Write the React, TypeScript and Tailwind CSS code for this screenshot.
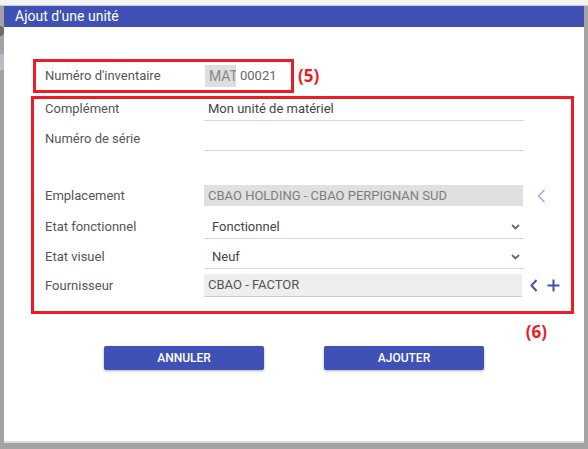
import React from 'react';

const Chevron = () => (
  <svg width="9" height="6" viewBox="0 0 9 6">
    <polyline points="1,1 4.5,4.5 8,1" fill="none" stroke="#666" strokeWidth="1.8" />
  </svg>
);

const Row = ({ label, children, center = false, className = '' }: { label: string; children: React.ReactNode; center?: boolean; className?: string }) => (
  <div className={`flex ${center ? 'items-center' : 'items-start'} ${className}`}>
    <div className={`w-[170px] shrink-0 pl-[11px] text-[13px] leading-[16px] text-[#555] ${center ? '' : 'pt-[2px]'}`}>{label}</div>
    {children}
  </div>
);

const App = () => {
  return (
    <div className="w-[588px] h-[449px] bg-[#a3a3a3] flex flex-col overflow-hidden" style={{ fontFamily: 'Roboto, "Liberation Sans", sans-serif' }}>
      <div className="h-[6px] bg-[#f3f3f3] border-b border-[#cfcfcf] shrink-0" />
      <div className="flex flex-1 min-h-0">
        {/* bits of the page behind the dialog */}
        <div className="w-[4px] shrink-0 flex flex-col">
          <div className="h-[20px]" />
          <div className="h-[10px] bg-[#6b6b6b] rounded-r-full" />
          <div className="h-[18px]" />
          <div className="h-[16px] bg-[#b8bcc8]" />
        </div>

        <div className="w-[580px] h-[437px] bg-white border-b-2 border-[#dcdcdc] flex flex-col">
          {/* header */}
          <div className="h-[21px] bg-[#3f51b5] text-white text-[14px] leading-[21px] pl-[11px]">Ajout d'une unité</div>

          {/* (5) */}
          <div className="flex items-center mt-[32px] ml-[29px]">
            <div className="w-[261px] h-[34px] border-[3px] border-[#ed1c24] flex items-center">
              <div className="w-[169px] shrink-0 pl-[9px] text-[13px] text-[#555]">Numéro d'inventaire</div>
              <div className="w-[31px] h-[22px] bg-[#dedede] overflow-hidden text-[14px] leading-[22px] text-[#888] pl-[4px] whitespace-nowrap">MAT</div>
              <div className="ml-[4px] text-[13px] text-[#666]">00021</div>
            </div>
            <div className="ml-[4px] text-[17px] font-bold text-[#ed1c24] leading-[20px]" style={{ fontFamily: '"Open Sans", sans-serif' }}>(5)</div>
          </div>

          {/* (6) */}
          <div className="ml-[27px] mt-[3px] w-[543px] h-[218px] border-[3px] border-[#ed1c24]">
            <Row label="Complément">
              <div className="w-[320px] h-[22px] border-b border-[#d6d6d6] pl-[4px] pt-[2px] text-[13px] leading-[16px] text-[#444]">Mon unité de matériel</div>
            </Row>
            <Row label="Numéro de série" className="mt-[8px]">
              <div className="w-[320px] h-[22px] border-b border-[#d6d6d6]" />
            </Row>
            <Row label="Emplacement" center className="mt-[34px]">
              <div className="w-[319px] h-[21px] bg-[#e0e0e0] pl-[4px] text-[13px] leading-[21px] text-[#7d7d7d] uppercase">CBAO HOLDING - CBAO PERPIGNAN SUD</div>
              <svg width="9" height="14" viewBox="0 0 9 14" className="ml-[14px]">
                <polyline points="7.5,1 1.5,7 7.5,13" fill="none" stroke="#9fa8da" strokeWidth="1.5" />
              </svg>
            </Row>
            <Row label="Etat fonctionnel" center className="mt-[9px]">
              <div className="w-[320px] h-[24px] border-b border-[#d6d6d6] pl-[8px] pr-[4px] flex items-center justify-between text-[13px] text-[#444]">
                <span>Fonctionnel</span>
                <Chevron />
              </div>
            </Row>
            <Row label="Etat visuel" center className="mt-[6px]">
              <div className="w-[320px] h-[24px] border-b border-[#d6d6d6] pl-[8px] pr-[4px] flex items-center justify-between text-[13px] text-[#444]">
                <span>Neuf</span>
                <Chevron />
              </div>
            </Row>
            <Row label="Fournisseur" center className="mt-[5px]">
              <div className="w-[318px] h-[23px] bg-[#eeeeee] border-b border-[#cfcfcf] pl-[4px] text-[13px] leading-[22px] text-[#555]">CBAO - FACTOR</div>
              <svg width="8" height="13" viewBox="0 0 8 13" className="ml-[8px]">
                <polyline points="6.5,1 1.5,6.5 6.5,12" fill="none" stroke="#3f51b5" strokeWidth="2" />
              </svg>
              <svg width="13" height="13" viewBox="0 0 13 13" className="ml-[9px]">
                <path d="M6.5 0.5V12.5M0.5 6.5H12.5" fill="none" stroke="#3f51b5" strokeWidth="2" />
              </svg>
            </Row>
          </div>

          <div className="flex justify-end pr-[37px] mt-[8px]">
            <div className="text-[17px] font-bold text-[#ed1c24] leading-[20px]" style={{ fontFamily: '"Open Sans", sans-serif' }}>(6)</div>
          </div>

          {/* buttons */}
          <div className="flex justify-center gap-[60px] mt-[4px]">
            <button className="w-[160px] h-[24px] bg-[#3f51b5] text-white text-[12px] font-medium rounded-[2px] shadow-[0_1px_3px_rgba(0,0,0,0.3)]">ANNULER</button>
            <button className="w-[160px] h-[24px] bg-[#3f51b5] text-white text-[12px] font-medium rounded-[2px] shadow-[0_1px_3px_rgba(0,0,0,0.3)]">AJOUTER</button>
          </div>
        </div>
      </div>
    </div>
  );
};

export default App;
